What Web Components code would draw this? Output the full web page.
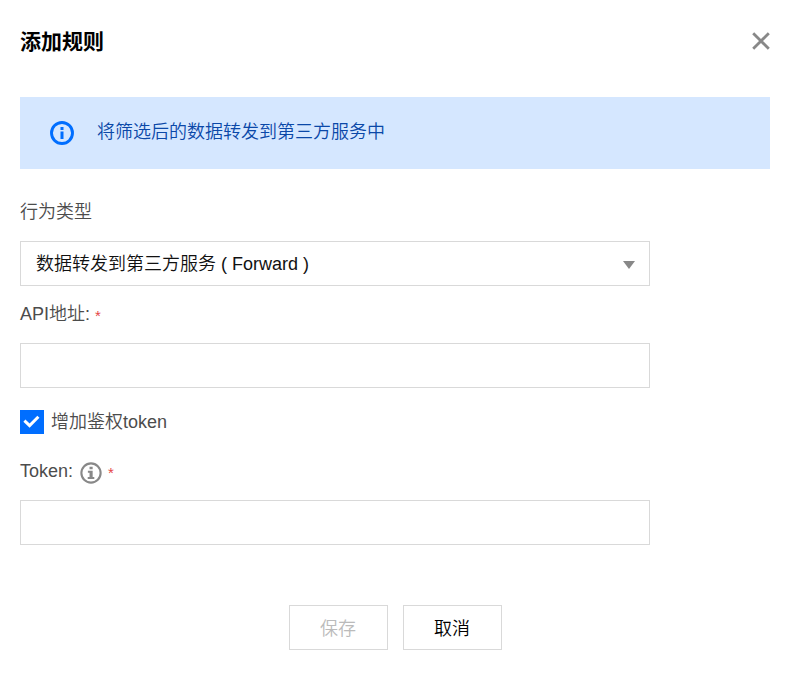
<!DOCTYPE html>
<html lang="zh-CN">
<head>
<meta charset="utf-8">
<title>添加规则</title>
<style>
body {
  margin: 0;
  background: #fff;
  color: #4c4c4c;
  font: 18px/28px "Liberation Sans", "Noto Sans CJK SC", sans-serif;
  --cjk-light: "Liberation Sans", "Noto Sans CJK SC DemiLight", "Noto Sans CJK SC", sans-serif;
  --line: #d9d9d9;
  --blue: #006eff;
}
</style>
</head>
<body>
<rule-dialog heading="添加规则">
  <info-banner>将筛选后的数据转发到第三方服务中</info-banner>
  <rule-form>
    <select-field label="行为类型" value="数据转发到第三方服务 ( Forward )"></select-field>
    <text-field label="API地址:" required></text-field>
    <check-field checked>增加鉴权token</check-field>
    <text-field label="Token:" required hint></text-field>
  </rule-form>
  <action-button slot="footer" disabled>保存</action-button>
  <action-button slot="footer">取消</action-button>
</rule-dialog>

<script>
class Base extends HTMLElement {
  connectedCallback() {
    if (this.shadowRoot) return;
    this.attachShadow({ mode: 'open' }).innerHTML =
      '<style>*{box-sizing:border-box}button,input,select{font:inherit;margin:0;border-radius:0}svg{display:block}</style>' + this.render();
  }
}

customElements.define('info-icon', class extends Base {
  render() {
    const glyph = this.hasAttribute('plain')
      ? '<path fill="currentColor" d="M10.5 6h3v3h-3zM10.5 10.5h3V18h-3z"/>'
      : '<path fill="currentColor" d="M10.4 5.2h3.4V8h-3.4zM8.6 9.6h5.2v6.8h1.8v2.2H8.4v-2.2h2v-4.6H8.6z"/>';
    const width = this.hasAttribute('plain') ? 2.9 : 2.3;
    return `<style>:host{display:block;flex:none}svg{width:100%;height:100%}</style>
    <svg viewBox="0 0 24 24" aria-hidden="true">
      <circle cx="12" cy="12" r="10.5" fill="none" stroke="currentColor" stroke-width="${width}"/>${glyph}
    </svg>`;
  }
});

customElements.define('rule-dialog', class extends Base {
  render() {
    return `<style>
      :host{display:block;padding:24px 28px 24px 20px}
      header{display:flex;align-items:center;justify-content:space-between;height:36px;margin-bottom:37px}
      h1{margin:0;color:#000;font-size:21px;font-weight:700;line-height:36px}
      button{display:grid;place-items:center;width:18px;height:34px;padding:0;border:0;background:none;color:#888;align-self:flex-start}
    	footer{display:flex;justify-content:center;gap:15px;margin-top:60px}
    </style>
    <section role="dialog" aria-labelledby="title">
      <header><h1 id="title">${this.getAttribute('heading')}</h1>
        <button type="button" aria-label="关闭"><svg width="18" height="18" viewBox="0 0 18 18"><path d="M1.2 1.2 16.8 16.8M16.8 1.2 1.2 16.8" stroke="currentColor" stroke-width="2.8" fill="none"/></svg></button>
      </header>
      <slot></slot>
      <footer><slot name="footer"></slot></footer>
    </section>`;
  }
});

customElements.define('info-banner', class extends Base {
  render() {
    return `<style>
      :host{display:flex;align-items:center;gap:23px;min-height:72px;padding:0 30px;background:#d5e7ff;color:#0a48a8;font-family:var(--cjk-light)}
      info-icon{width:24px;height:24px;color:var(--blue)}
      p{margin:0 0 2px}
    </style><info-icon plain></info-icon><p><slot></slot></p>`;
  }
});

customElements.define('rule-form', class extends Base {
  render() {
    return `<style>:host{display:block;max-width:630px;margin-top:29px}</style><slot></slot>`;
  }
});

const fieldStyle = `<style>
  :host{display:block}
  .head{display:flex;align-items:center;height:28px;margin-bottom:15px;font-family:var(--cjk-light)}
  .star{margin-left:5px;color:#e54545;font-size:15px;line-height:28px;padding-top:3px}
  info-icon{width:22px;height:22px;margin:4px 1px 0 7px;color:#888}
  input,select{display:block;width:100%;height:45px;padding:0 15px;border:1px solid var(--line);background:#fff;color:#111;outline:0}
</style>`;

customElements.define('select-field', class extends Base {
  render() {
    return fieldStyle + `<style>
      :host{margin-bottom:14px}
      .box{display:grid;align-items:center}
      .box>*{grid-area:1/1}
      select{appearance:none;font-family:var(--cjk-light)}
      svg{justify-self:end;margin:2px 15px 0 0;pointer-events:none}
    </style>
    <div class="head"><label for="c">${this.getAttribute('label')}</label></div>
    <div class="box"><select id="c"><option>${this.getAttribute('value')}</option></select>
    <svg width="12" height="8" viewBox="0 0 12 8" aria-hidden="true"><path d="M0 0h12L6 8z" fill="#888"/></svg></div>`;
  }
});

customElements.define('text-field', class extends Base {
  render() {
    const hint = this.hasAttribute('hint') ? '<info-icon></info-icon>' : '';
    const star = this.hasAttribute('required') ? '<span class="star">*</span>' : '';
    return fieldStyle + `<div class="head"><label for="c">${this.getAttribute('label')}</label>${hint}${star}</div>
    <input id="c" type="text" ${star ? 'required' : ''}>`;
  }
});

customElements.define('check-field', class extends Base {
  render() {
    return `<style>
      :host{display:block;margin:22px 0 23px;font-family:var(--cjk-light)}
      label{display:flex;align-items:center;gap:7px;height:24px}
      .box{display:grid;width:24px;height:24px}
      .box>*{grid-area:1/1}
      input{appearance:none;width:24px;height:24px;border:1px solid var(--line)}
      input:checked{background:var(--blue);border-color:var(--blue)}
      svg{visibility:hidden;pointer-events:none;z-index:1}
      input:checked+svg{visibility:visible}
    </style>
    <label><span class="box"><input type="checkbox" ${this.hasAttribute('checked') ? 'checked' : ''}>
    <svg width="24" height="24" viewBox="0 0 24 24" aria-hidden="true"><path d="M4.4 10.6 9.6 15.6 18.4 6.8" fill="none" stroke="#fff" stroke-width="3"/></svg></span>
    <span><slot></slot></span></label>`;
  }
});

customElements.define('action-button', class extends Base {
  render() {
    return `<style>
      :host{display:block}
      button{min-width:99px;height:45px;padding:2px 29px 0;border:1px solid var(--line);background:#fff;color:#000;font-family:var(--cjk-light)}
      button:disabled{color:#bbb}
    </style><button type="button" ${this.hasAttribute('disabled') ? 'disabled' : ''}><slot></slot></button>`;
  }
});
</script>
</body>
</html>
